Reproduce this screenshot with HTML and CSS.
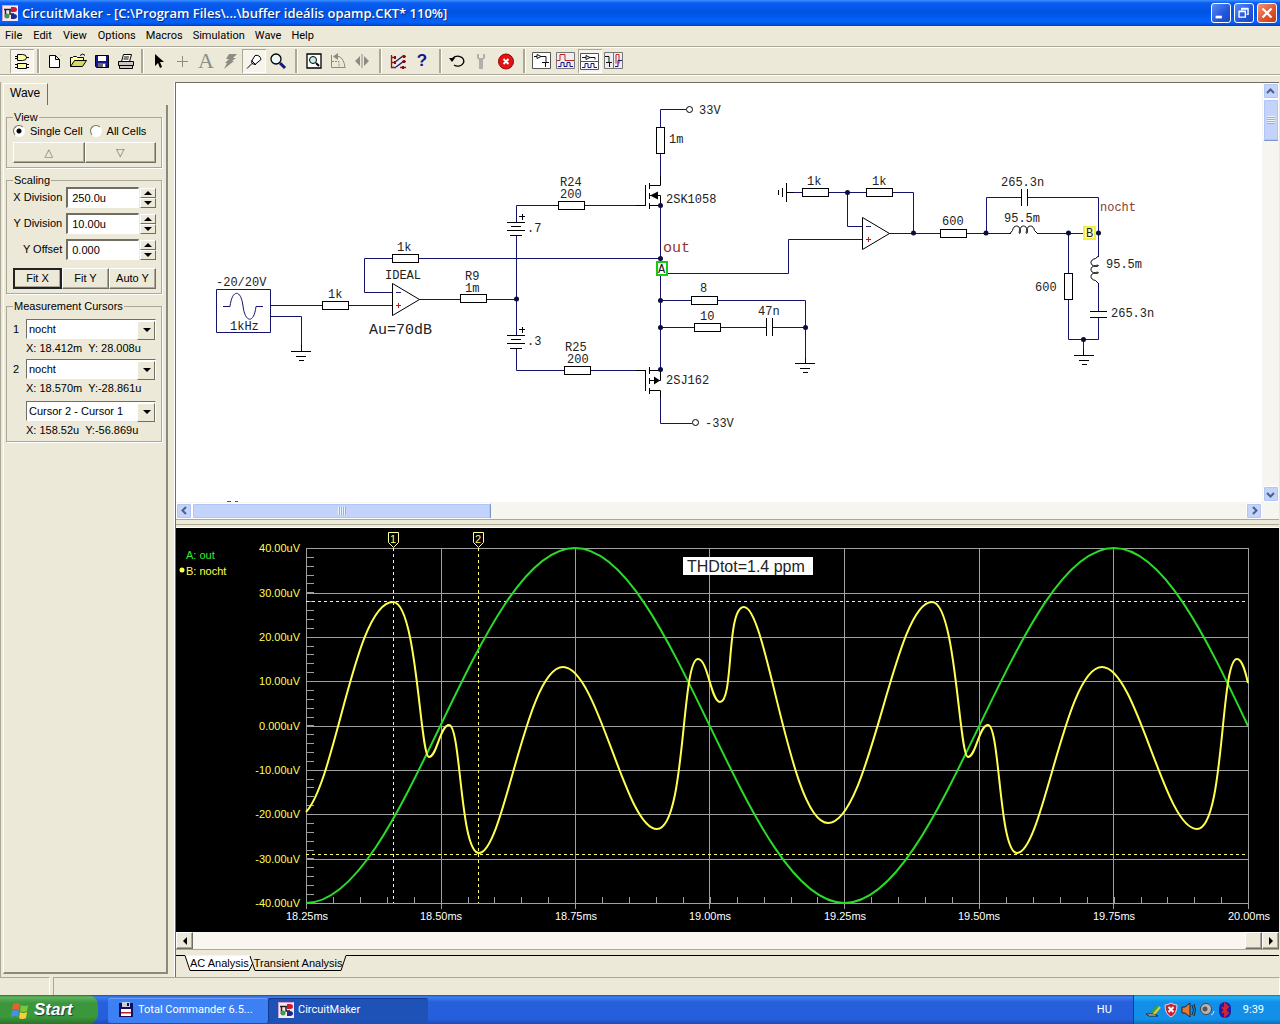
FILE: index.html
```html
<!DOCTYPE html>
<html lang="en">
<head>
<meta charset="utf-8">
<title>CircuitMaker</title>
<link rel="stylesheet" href="styles.css">
</head>
<body>
<svg width="0" height="0" class="defs" aria-hidden="true">
  <defs>
    <symbol id="app" viewBox="0 0 16 16">
      <rect width="16" height="16" fill="#fbe6f0"/>
      <path d="M.5 15.500V.5h15" fill="none" stroke="#c9a0c8"/>
      <path d="M2 4.500h8M3.500 4v8M8 5v4h4" fill="none" stroke="#222" stroke-width="1.500"/>
      <path d="M9 2h3a3 2.500 0 0 1 0 5H9z" fill="#d01830"/>
      <path d="M9 9h3a3 2.500 0 0 1 0 5H9z" fill="#1c2a8c"/>
      <circle cx="5" cy="11" r="2.500" fill="#3c9a50"/>
    </symbol>
    <symbol id="rh" viewBox="0 0 28 10" overflow="visible"><rect x=".5" y=".5" width="26" height="8" fill="#fff" stroke="#000"/></symbol>
    <symbol id="rv" viewBox="0 0 10 28" overflow="visible"><rect x=".5" y=".5" width="8" height="26" fill="#fff" stroke="#000"/></symbol>
    <symbol id="gnd" viewBox="0 0 22 12" overflow="visible"><path d="M0 .5h20M5 5.500h10M8 9.500h5" fill="none" stroke="#000"/></symbol>
    <symbol id="bat" viewBox="0 0 20 16" overflow="visible"><path d="M0 1.500h18M4 5.500h10M0 9.500h18M3 14.500h12M12 -4.500h6M15.500 -7v6" fill="none" stroke="#000"/></symbol>
    <symbol id="amp" viewBox="0 0 30 34" overflow="visible"><path d="M.5 .5v32l27-16z" fill="#fff" stroke="#000"/><path d="M4 9.500h5" stroke="#22227a"/><path d="M4 22.500h5M6.500 20v5" stroke="#c01818"/></symbol>
  </defs>
</svg>

<header class="titlebar">
  <svg class="app-icon" viewBox="0 0 16 16"><use href="#app"/></svg>
  <h1>CircuitMaker - [C:\Program Files\...\buffer ideális opamp.CKT* 110%]</h1>
  <div class="win-buttons">
    <button class="win" aria-label="Minimize"><svg viewBox="0 0 20 20"><path d="M4 14.500h7" stroke="#fff" stroke-width="3"/></svg></button>
    <button class="win" aria-label="Restore"><svg viewBox="0 0 20 20"><path d="M4.500 8.500h7v6h-7zM4 8h8M7.500 7V5.500h7v6H13M7 5h8" fill="none" stroke="#fff" stroke-width="1.500"/></svg></button>
    <button class="win close" aria-label="Close"><svg viewBox="0 0 20 20"><path d="M5 5l10 10M15 5L5 15" stroke="#fff" stroke-width="2.500"/></svg></button>
  </div>
</header>

<nav class="menubar">
  <a href="#">File</a><a href="#">Edit</a><a href="#">View</a><a href="#">Options</a><a href="#">Macros</a><a href="#">Simulation</a><a href="#">Wave</a><a href="#">Help</a>
</nav>

<div class="toolbar" role="toolbar" aria-label="Tools">
  <button class="tool on" aria-label="Parts"><svg viewBox="0 0 24 24"><path d="M7.500 5.500h5q4 0 4 3t-4 3h-5zM5 7.500h2M5 9.500h2M16 8.500h3M7.500 14.500h9v5h-9zM5 15.500h2M17 15.500h2M5 18.500h2M17 18.500h2" fill="#ffffa0" stroke="#000"/></svg></button>
  <span class="sep"></span>
  <button class="tool" aria-label="New"><svg viewBox="0 0 24 24"><path d="M7.500 6.500h6l4 4v8h-10zM13.500 6.500v4h4" fill="#fff" stroke="#000"/><path d="M16 4l2 2M20 6l-2 1M7 4l1 1" stroke="#e8e060"/></svg></button>
  <button class="tool" aria-label="Open"><svg viewBox="0 0 24 24"><path d="M4.500 17.500v-9h2l1-1h3l1 1h6v3" fill="#ffffa0" stroke="#000"/><path d="M4.500 17.500l4-6h12l-4 6z" fill="#d8d860" stroke="#000"/><path d="M14 6.500q3-3 5 0" fill="none" stroke="#000"/></svg></button>
  <button class="tool" aria-label="Save"><svg viewBox="0 0 24 24"><path d="M5.500 6.500h13v12h-12l-1-1z" fill="#14148c" stroke="#000"/><path d="M8 7h8v5H8z" fill="#fff"/><path d="M8 14h8v4H8z" fill="#667"/><path d="M13 15h2v3h-2z" fill="#fff"/></svg></button>
  <button class="tool" aria-label="Print"><svg viewBox="0 0 24 24"><path d="M7.500 12.500l2-7h8l-2 7z" fill="#fff" stroke="#000"/><path d="M4.500 12.500h15v4h-15zM5.500 16.500h13v3h-13z" fill="#c8c8c0" stroke="#000"/><path d="M10 8h5M9.500 10h5" stroke="#000"/></svg></button>
  <span class="sep"></span>
  <button class="tool" aria-label="Arrow"><svg viewBox="0 0 24 24"><path d="M9 5v12l3-3 2 5 2-1-2-5h4z"/></svg></button>
  <button class="tool" aria-label="Wire"><svg viewBox="0 0 24 24"><path d="M12.500 7v11M7 12.500h11" stroke="#8c8c84"/></svg></button>
  <button class="tool letter" aria-label="Text">A</button>
  <button class="tool" aria-label="Delete"><svg viewBox="0 0 24 24"><path d="M11 5h8l-4 4h3l-4 3h2l-10 8 3-6H7l4-4H8z" fill="#8c8c84"/></svg></button>
  <button class="tool on" aria-label="Probe"><svg viewBox="0 0 24 24"><path d="M5 19.500l5-5M9.500 12.500l3.500-6q5-1 6 4l-6 5-3-1zM9.500 11.500l4.500 4.500" fill="#fff" stroke="#000"/></svg></button>
  <button class="tool" aria-label="Zoom"><svg viewBox="0 0 24 24"><circle cx="10" cy="10" r="5" fill="#e8f8f8" stroke="#000" stroke-width="1.300"/><path d="M14 14l5 5" stroke="#14148c" stroke-width="3"/></svg></button>
  <span class="sep wide"></span>
  <button class="tool" aria-label="Fit"><svg viewBox="0 0 24 24"><path d="M5 5h14v14H5z" fill="#fff" stroke="#000" stroke-width="1.300"/><circle cx="11" cy="11" r="3.500" fill="#c8ecec" stroke="#000"/><path d="M14 14l3 3" stroke="#000" stroke-width="2"/></svg></button>
  <button class="tool" aria-label="Rotate"><svg viewBox="0 0 24 24"><path d="M5.500 6v12.500h14M8 7.500h5q5 2 6 11" fill="none" stroke="#8c8c84"/><path d="M6 12.500h7v6" fill="none" stroke="#8c8c84" stroke-dasharray="2 1"/><path d="M12 4v7L7 7.500z" fill="#8c8c84"/></svg></button>
  <button class="tool" aria-label="Mirror"><svg viewBox="0 0 24 24"><path d="M12 5v14" stroke="#8c8c84"/><path d="M10 7v10l-5-5zM14 7v10l5-5z" fill="#8c8c84"/></svg></button>
  <span class="sep wide"></span>
  <button class="tool" aria-label="Simulation setup"><svg viewBox="0 0 24 24"><path d="M9 13l8-6M10 18l8-6" fill="none" stroke="#14148c" stroke-width="1.300"/><path d="M5.500 6v13M5 8.500h4M5 13.500h4M5 18.500h5M16 7.500h4M16 12.500h4M14 18.500h6" fill="none" stroke="#a01010" stroke-width="1.300"/><path d="M8 7h2v3H8zM8 12h2v3H8zM17 6h2v3h-2zM17 11h2v3h-2zM16 17h2v3h-2z" fill="#801010"/></svg></button>
  <button class="tool help" aria-label="Help">?</button>
  <span class="sep wide"></span>
  <button class="tool" aria-label="Reset"><svg viewBox="0 0 24 24"><path d="M6 11a6 5 0 1 1 2 5" fill="none" stroke="#000" stroke-width="1.300"/><path d="M3 9l6 0-3 4z"/></svg></button>
  <button class="tool" aria-label="Step"><svg viewBox="0 0 24 24"><path d="M7 5v4l2 2v9h4v-9l2-2V5h-2v4H9V5z" fill="#b0b0a8"/></svg></button>
  <button class="tool" aria-label="Stop"><svg viewBox="0 0 24 24"><circle cx="12" cy="12.500" r="7.500" fill="#e01414" stroke="#900"/><path d="M9.500 10l5 5M14.500 10l-5 5" stroke="#fff" stroke-width="1.800"/></svg></button>
  <span class="sep wide"></span>
  <button class="tool" aria-label="Schematic view"><svg viewBox="0 0 24 24"><path d="M2.500 3.500h18v16h-18z" fill="#fff" stroke="#555"/><path d="M4 7.500h3v-2l4 2-4 2v-2M11 7.500h5v6M12 13.500h7M15.500 14v4" fill="none" stroke="#111"/></svg></button>
  <button class="tool" aria-label="Waveform view"><svg viewBox="0 0 24 24"><path d="M2.500 3.500h18v16h-18z" fill="#eee" stroke="#777"/><path d="M3 11.500h3v-6h5v6h9" fill="none" stroke="#c02020"/><path d="M4 17.500h3v-4h3v4h3v-4h3v4h3" fill="none" stroke="#14148c"/></svg></button>
  <button class="tool on" aria-label="Split horizontally"><svg viewBox="0 0 24 24"><path d="M2.500 4.500h18v16h-18zM3 12.500h17" fill="#fff" stroke="#555"/><path d="M4 8.500h4v-2l4 2-4 2v-2M12 8.500h5v2" fill="none" stroke="#111"/><path d="M4 18.500h3v-4h3v4h3v-4h3v4h3" fill="none" stroke="#14148c"/></svg></button>
  <button class="tool" aria-label="Split vertically"><svg viewBox="0 0 24 24"><path d="M2.500 3.500h18v16h-18zM11.500 4v15" fill="#eee" stroke="#777"/><path d="M3 7.500h4v6M4 13.500h6M7.500 14v4" fill="none" stroke="#111"/><path d="M14 14.500v-9h3v9" fill="none" stroke="#c02020"/><path d="M13 17.500h3v-6h4" fill="none" stroke="#14148c"/></svg></button>
</div>

<main class="work">
  <aside class="side">
    <div class="side-tab">Wave</div>
    <form class="sheet">
      <fieldset>
        <legend>View</legend>
        <div class="radios">
          <label><input type="radio" name="view" checked>Single Cell</label>
          <label><input type="radio" name="view">All Cells</label>
        </div>
        <div class="pair">
          <button type="button" class="raised arrow" aria-label="Previous">△</button>
          <button type="button" class="raised arrow" aria-label="Next">▽</button>
        </div>
      </fieldset>
      <fieldset>
        <legend>Scaling</legend>
        <div class="field"><label for="xd">X Division</label><input id="xd" type="text" value="250.0u"><span class="spin"><button type="button" class="up" aria-label="X Division up"></button><button type="button" class="down" aria-label="X Division down"></button></span></div>
        <div class="field"><label for="yd">Y Division</label><input id="yd" type="text" value="10.00u"><span class="spin"><button type="button" class="up" aria-label="Y Division up"></button><button type="button" class="down" aria-label="Y Division down"></button></span></div>
        <div class="field"><label for="yo">Y Offset</label><input id="yo" type="text" value="0.000"><span class="spin"><button type="button" class="up" aria-label="Y Offset up"></button><button type="button" class="down" aria-label="Y Offset down"></button></span></div>
        <div class="pair fit">
          <button type="button" class="raised default">Fit X</button>
          <button type="button" class="raised">Fit Y</button>
          <button type="button" class="raised">Auto Y</button>
        </div>
      </fieldset>
      <fieldset class="cursors">
        <legend>Measurement Cursors</legend>
        <label for="c1">1</label>
        <span class="combo"><select id="c1"><option>nocht</option><option>out</option></select></span>
        <output>X: 18.412m&nbsp; Y: 28.008u</output>
        <label for="c2">2</label>
        <span class="combo"><select id="c2"><option>nocht</option><option>out</option></select></span>
        <output>X: 18.570m&nbsp; Y:-28.861u</output>
        <span class="combo last"><select aria-label="Difference"><option>Cursor 2 - Cursor 1</option></select></span>
        <output>X: 158.52u&nbsp; Y:-56.869u</output>
      </fieldset>
    </form>
  </aside>

  <section class="views">
    <div class="schematic">
      <svg viewBox="176 83 1086 419" class="circuit" role="img" aria-label="Circuit schematic">
        <g class="wire">
          <path d="M270 305.500H392M270 316.500H301.500V345M392 292.500H364.500V258.500H660M419 299.500H516"/>
          <path d="M516.500 222V205.500H646M516.500 235V335M516.500 349V370.500H646"/>
          <path d="M686 109.500H660.500V176M660.500 205V370M667 273.500H788.500V239.500H862"/>
          <path d="M660 300.500H805.500V358M660 327.500H766M773 327.500H805M660.500 396V423.500H692"/>
          <path d="M794 192.500H913.500V233M847.500 192V226.500H862M889 233.500H1011M1037 233.500H1098"/>
          <path d="M986.500 233V197.500H1022M1028 197.500H1098.500V257M1098.500 283V311M1098.500 317V339.500H1068.500V233M1083.500 339V350"/>
          <path d="M216.500 289.500h54v43h-54z"/>
          <path d="M223 306.500h7C232 289 241 289 243 306S254 324 256 306.500h7"/>
        </g>
        <g class="part">
          <path d="M301.500 345v6M805.500 358v6M1083.500 350v6M786 192.500h8M786.500 183v19M782.500 188v9M778.500 190v5"/>
          <path d="M645.500 185v20.500H636M649.500 183v6M649.500 193v6M649.500 203v6M649 185.500h11.500V176M649 195.500h11.500V205.500H649"/>
          <path d="M636 370.500h9.500V391M649.500 367v7M649.500 378v6M649.500 388v6M649 370.500h11.500v10H649M649 390.500h11.500V398"/>
          <path d="M766.500 318v18M772.500 318v18M1021.500 189v17M1027.500 189v17M1090 311.500h17M1090 317.500h17"/>
          <path d="M1010 233.500l2.500-3c1-6 7-6 8 0c0 4-2 4-1 0c1-6 7-6 8 0c0 4-2 4-1 0c1-6 7-6 8 0l3 3"/>
          <path d="M1098.500 256l-3 2.500c-6 1-6 7 0 8c4 0 4-2 0-1c-6 1-6 7 0 8c4 0 4-2 0-1c-6 1-6 7 0 8l3 3"/>
          <circle cx="689.500" cy="109.500" r="3"/><circle cx="695.500" cy="422.500" r="3"/>
        </g>
        <path d="M650 195.500l8-4v8zM660 380.500l-6-4v8z"/>
        <g>
          <use href="#rh" x="322" y="301" width="28" height="10"/><use href="#rh" x="392" y="254" width="28" height="10"/>
          <use href="#rh" x="460" y="294" width="28" height="10"/><use href="#rh" x="558" y="201" width="28" height="10"/>
          <use href="#rh" x="564" y="366" width="28" height="10"/><use href="#rh" x="691" y="296" width="28" height="10"/>
          <use href="#rh" x="694" y="323" width="28" height="10"/><use href="#rh" x="802" y="188" width="28" height="10"/>
          <use href="#rh" x="866" y="188" width="28" height="10"/><use href="#rh" x="940" y="229" width="28" height="10"/>
          <use href="#rv" x="656" y="127" width="10" height="28"/><use href="#rv" x="1064" y="273" width="10" height="28"/>
          <use href="#amp" x="392" y="283" width="30" height="34"/><use href="#amp" x="862" y="217" width="30" height="34"/>
          <use href="#bat" x="507" y="221" width="20" height="16"/><use href="#bat" x="507" y="334" width="20" height="16"/>
          <use href="#gnd" x="291" y="351" width="22" height="12"/><use href="#gnd" x="795" y="363" width="22" height="12"/><use href="#gnd" x="1074" y="355" width="22" height="12"/>
        </g>
        <g class="node">
          <circle cx="516.500" cy="299" r="2.500"/><circle cx="660.500" cy="258.500" r="2.500"/><circle cx="660.500" cy="205.500" r="2.500"/>
          <circle cx="660.500" cy="300.500" r="2.500"/><circle cx="660.500" cy="327.500" r="2.500"/><circle cx="660.500" cy="369.500" r="2.500"/>
          <circle cx="805.500" cy="327.500" r="2.500"/><circle cx="847.500" cy="192.500" r="2.500"/><circle cx="913.500" cy="233" r="2.500"/>
          <circle cx="986" cy="233" r="2.500"/><circle cx="1068.500" cy="233" r="2.500"/><circle cx="1098.500" cy="233" r="2.500"/><circle cx="1083.500" cy="339.500" r="2.500"/>
        </g>
        <rect x="657" y="262" width="10" height="13" fill="#fff" stroke="#1c1" stroke-width="2"/>
        <rect x="1084" y="227" width="11" height="12" fill="#ffffc0" stroke="#f0f040" stroke-width="2"/>
        <path d="M227 501.500h4M235 501.500h3" stroke="#555"/>
        <g class="val">
          <text x="216" y="286">-20/20V</text><text x="230" y="330">1kHz</text><text x="328" y="298">1k</text><text x="397" y="251">1k</text>
          <text x="385" y="279">IDEAL</text><text x="465" y="280">R9</text><text x="465" y="292">1m</text>
          <text x="527" y="232">.7</text><text x="527" y="345">.3</text><text x="560" y="186">R24</text><text x="560" y="198">200</text>
          <text x="565" y="351">R25</text><text x="567" y="363">200</text><text x="699" y="114">33V</text><text x="669" y="143">1m</text>
          <text x="666" y="203">2SK1058</text><text x="666" y="384">2SJ162</text><text x="705" y="427">-33V</text>
          <text x="658" y="273">A</text><text x="700" y="292">8</text><text x="700" y="320">10</text><text x="758" y="315">47n</text>
          <text x="807" y="185">1k</text><text x="872" y="185">1k</text><text x="942" y="225">600</text><text x="1001" y="186">265.3n</text>
          <text x="1004" y="222">95.5m</text><text x="1086" y="237">B</text><text x="1106" y="268">95.5m</text><text x="1111" y="317">265.3n</text><text x="1035" y="291">600</text>
          <text x="1100" y="211" class="net">nocht</text>
          <text x="369" y="334" class="big">Au=70dB</text><text x="663" y="252" class="big net">out</text>
        </g>
      </svg>
      <div class="vbar">
        <button class="xp" aria-label="Scroll up"><svg viewBox="0 0 9 9"><path d="M1 6l3.500-3.500L8 6"/></svg></button>
        <div class="xp thumb v"></div>
        <span class="fill"></span>
        <button class="xp" aria-label="Scroll down"><svg viewBox="0 0 9 9"><path d="M1 3l3.500 3.500L8 3"/></svg></button>
      </div>
    </div>
    <div class="hbar">
      <button class="xp" aria-label="Scroll left"><svg viewBox="0 0 9 9"><path d="M6 1L2.500 4.500 6 8"/></svg></button>
      <div class="xp thumb h"></div>
      <span class="fill"></span>
      <button class="xp" aria-label="Scroll right"><svg viewBox="0 0 9 9"><path d="M3 1l3.500 3.500L3 8"/></svg></button>
    </div>
    <div class="splitter"></div>
    <svg viewBox="176 528 1103 404" class="plot" role="img" aria-label="Transient analysis waveforms">
      <path class="grid" d="M306 548.500H1248M306 593.500H1248M306 637.500H1248M306 681.500H1248M306 726.500H1248M306 770.500H1248M306 814.500H1248M306 859.500H1248M306 903.500H1248M306.500 548V909M441.500 548V909M575.500 548V909M709.500 548V909M844.500 548V909M979.500 548V909M1113.500 548V909M1248.500 548V909"/>
      <path class="ticks" d="M310 548V904" stroke-width="8" stroke-dasharray="1 7.870"/>
      <path class="ticks" d="M306 900H1249" stroke-width="7" stroke-dasharray="1 25.920"/>
      <path class="cursor" d="M306 601.500H1248M306 854.500H1248M393.500 548V903M478.500 548V903"/>
      <path class="flag" d="M388.500 532.500h10v10l-5 5-5-5zM473.500 532.500h10v10l-5 5-5-5z"/>
      <path class="trace out" d="M306 903C404 903 477 548 575 548S746 903 844.500 903 1016 548 1114 548C1163 548 1206 637 1248 726"/>
      <path class="trace nocht" d="M306 812C336 780 355 602 393 602C417 602 420 757 429 757C437 757 440 725 449 725C461 725 460 853 479 853C504 853 526 667 563 667C598 667 625 829 657 829C686 829 681 659 698 659C708 659 711 702 720 702C734 702 726 607 744 607C767 607 790 823 828 823C870 823 894 602 932 602C956 602 959 757 968 757C976 757 979 725 988 725C1000 725 999 853 1017 853C1043 853 1065 667 1102 667C1137 667 1164 829 1197 829C1225 829 1220 659 1237 659C1242 659 1245 670 1248 683"/>
      <rect x="683" y="557" width="130" height="18" fill="#fff"/>
      <text x="687" y="572" class="note">THDtot=1.4 ppm</text>
      <g class="lab">
        <text x="393" y="543" class="mid">1</text><text x="478" y="543" class="mid">2</text>
        <text x="186" y="559" class="green">A: out</text><text x="186" y="575">B: nocht</text>
        <circle cx="182" cy="570" r="2.500"/>
        <g class="end">
          <text x="300" y="552">40.00uV</text><text x="300" y="597">30.00uV</text><text x="300" y="641">20.00uV</text><text x="300" y="685">10.00uV</text><text x="300" y="730">0.000uV</text>
          <text x="300" y="774">-10.00uV</text><text x="300" y="818">-20.00uV</text><text x="300" y="863">-30.00uV</text><text x="300" y="907">-40.00uV</text>
        </g>
        <g class="mid white">
          <text x="307" y="920">18.25ms</text><text x="441" y="920">18.50ms</text><text x="576" y="920">18.75ms</text><text x="710" y="920">19.00ms</text>
          <text x="845" y="920">19.25ms</text><text x="979" y="920">19.50ms</text><text x="1114" y="920">19.75ms</text><text x="1249" y="920">20.00ms</text>
        </g>
      </g>
    </svg>
    <div class="classic-bar">
      <button class="raised" aria-label="Scroll left"><svg viewBox="0 0 8 8"><path d="M6 0v8L2 4z"/></svg></button>
      <span class="fill"></span>
      <div class="raised knob"></div>
      <button class="raised" aria-label="Scroll right"><svg viewBox="0 0 8 8"><path d="M2 0v8l4-4z"/></svg></button>
    </div>
    <div class="tabs">
      <svg viewBox="0 0 1103 17" preserveAspectRatio="xMinYMin slice" class="tab-lines" aria-hidden="true"><path d="M9 .5h65l3 7-4 8H14z" fill="#fff"/><path d="M0 .5h9l5 15h59l4-8M74 1l5 14.500h86l5-15h3000" fill="none" stroke="#000"/></svg>
      <a href="#">AC Analysis</a><a href="#">Transient Analysis</a>
    </div>
  </section>
</main>

<footer class="status"><span></span><span></span></footer>

<div class="taskbar">
  <button class="start"><svg viewBox="0 0 18 18"><path d="M2 3q4-2 7 0l-1 6q-3-2-7 0z" fill="#e8602c"/><path d="M10 4q3 2 7 0l-1 6q-4 2-7 0z" fill="#7cc83c"/><path d="M1 10q4-2 7 0l-1 6q-3-2-7 0z" fill="#4c8cf0"/><path d="M9 11q3 2 7 0l-1 6q-4 2-7 0z" fill="#f8d030"/></svg>Start</button>
  <button class="task"><svg viewBox="0 0 16 16"><path d="M1 1h14v14H1z" fill="#101060"/><path d="M4 0h8v5H4z" fill="#ccd"/><path d="M9 1h2v3H9z" fill="#101060"/><path d="M3 7h10v7H3z" fill="#fff"/><path d="M3 10h10v1.500H3z" fill="#c02020"/></svg>Total Commander 6.5...</button>
  <button class="task active"><svg viewBox="0 0 16 16"><use href="#app"/></svg>CircuitMaker</button>
  <span class="lang">HU</span>
  <div class="tray">
    <svg viewBox="0 0 16 16"><path d="M1 12h8l4 2H4z" fill="#eee" stroke="#222"/><path d="M5 11l6-8" stroke="#28c" stroke-width="2"/><path d="M7 11l6-7" stroke="#3a3" stroke-width="2"/><path d="M9 12l6-7" stroke="#e8d020" stroke-width="2"/></svg>
    <svg viewBox="0 0 16 16"><path d="M8 1q3 2 6 2 0 9-6 12-6-3-6-12 3 0 6-2z" fill="#c8202c" stroke="#ddd"/><path d="M5.500 5l5 5M10.500 5l-5 5" stroke="#fff" stroke-width="2"/></svg>
    <svg viewBox="0 0 16 16"><path d="M1 5h3l5-4v14l-5-4H1z" fill="#e87830" stroke="#222"/><path d="M11 3q3 5 0 10M13 2q3 6 0 12" fill="none" stroke="#222"/></svg>
    <svg viewBox="0 0 16 16"><circle cx="7" cy="7" r="5.500" fill="#b8b8b8" stroke="#444"/><circle cx="6" cy="7" r="2.500" fill="#555"/><path d="M12 13q3-1 3-4" fill="none" stroke="#dde"/></svg>
    <svg viewBox="0 0 16 16"><rect x="2" width="12" height="16" rx="6" fill="#1a20a0"/><path d="M5 5l6 6-3 3V2l3 3-6 6" fill="none" stroke="#e02030" stroke-width="1.800"/></svg>
    <time>9:39</time>
  </div>
</div>
</body>
</html>
```
FILE: styles.css
```css
* { box-sizing: border-box; }
body {
  margin: 0;
  min-height: 100vh;
  display: flex;
  flex-direction: column;
  background: #ece9d8;
  color: #000;
  font: 11px/13px "Liberation Sans", Arial, sans-serif;
}
button, input, select { font: inherit; color: inherit; margin: 0; padding: 0; border-radius: 0; }
a { color: inherit; text-decoration: none; }
svg { display: block; }
.defs { position: absolute; }

.titlebar {
  height: 26px;
  display: flex;
  align-items: center;
  padding: 0 3px 0 2px;
  background: linear-gradient(#3a90ff 0, #0a5cf0 3px, #0054e3 12px, #0463fb 22px, #0040c8 100%);
}
.app-icon { width: 16px; height: 16px; }
.titlebar h1 {
  flex: 1;
  margin: 0 0 0 4px;
  font: 600 13px/20px "Open Sans", "Noto Sans", sans-serif;
  color: #fff;
  text-shadow: 1px 1px #0a2a80;
  white-space: nowrap;
}
.win-buttons { display: flex; gap: 3px; }
.win {
  width: 20px;
  height: 20px;
  border: 1px solid #fff;
  border-radius: 3px;
  background: linear-gradient(135deg, #5c8cf4, #2256dc 60%, #1c48c0);
}
.win svg { width: 18px; height: 18px; }
.win.close { background: linear-gradient(135deg, #f09478, #e0502c 60%, #c03c18); }

.menubar {
  height: 20px;
  display: flex;
  align-items: center;
  gap: 11px;
  padding-left: 5px;
  font: 11px/18px Roboto, "Noto Sans", sans-serif;
}
.menubar a:nth-child(n+5) { margin-left: -1px; }

.toolbar {
  height: 29px;
  display: flex;
  align-items: center;
  padding-left: 10px;
  border-top: 1px solid #aca899;
  border-bottom: 1px solid #aca899;
  box-shadow: inset 0 1px #fff, 0 1px #fff;
}
.tool { width: 24px; height: 24px; border: 0; background: none; }
.tool svg { width: 24px; height: 24px; }
.tool.on { background: #f6f4ec; box-shadow: inset 1px 1px #aca899, inset -1px -1px #fff; }
.tool.letter { font: 22px/22px "Liberation Serif", serif; color: #8c8c84; }
.tool.help { font: bold 17px/22px "Liberation Sans", sans-serif; color: #14148c; }
.sep { width: 8px; height: 24px; display: flex; justify-content: center; }
.sep.wide { width: 12px; }
.sep::before { content: ""; width: 2px; background: #aca899; border-right: 1px solid #fff; }

.work { flex: 1; display: flex; padding: 7px 1px 0 0; }
.side { width: 175px; display: flex; flex-direction: column; padding: 1px 6px 3px 2px; border-right: 1px solid #fff; border-left: 1px solid #aca899; }
.side-tab {
  align-self: flex-start;
  height: 22px;
  padding: 3px 7px 0 6px;
  border: 1px solid #fff;
  border-right-color: #716f64;
  border-bottom: 0;
  line-height: 13px;
  font-size: 12px;
}
.sheet {
  flex: 1;
  display: flex;
  flex-direction: column;
  gap: 6px;
  padding: 6px 4px 0 2px;
  border-right: 2px solid #8c897c;
  border-bottom: 2px solid #8c897c;
  border-left: 1px solid #fff;
}
fieldset { min-width: 0; margin: 0; padding: 0 5px 4px 6px; border: 1px solid #aca899; box-shadow: 1px 1px #fff; }
legend { margin: 0; padding: 0 1px; height: 13px; }
.radios { display: flex; align-items: center; gap: 7px; height: 14px; white-space: nowrap; }
.radios label { display: flex; align-items: center; gap: 5px; }
.radios input { appearance: none; width: 12px; height: 12px; border: 1px solid #716f64; border-right-color: #fff; border-bottom-color: #fff; border-radius: 50%; background: #fff; }
.radios input:checked { background: radial-gradient(#000 0 2px, #fff 3px); }
.pair { display: flex; margin-top: 4px; }
.raised { border: 1px solid #fff; border-right-color: #716f64; border-bottom-color: #716f64; background: #ece9d8; box-shadow: inset -1px -1px #aca899; }
.pair .raised { flex: 1; height: 21px; white-space: nowrap; }
.pair .arrow { color: #716f64; font: 11px/17px "DejaVu Sans", sans-serif; }
.pair.fit { margin-top: 8px; }
.pair .default { border: 2px solid #222; }
.field { display: flex; align-items: center; height: 21px; margin: 0 0 5px; }
.field label { width: 50px; text-align: right; white-space: nowrap; }
.field input {
  width: 73px;
  height: 21px;
  margin: 0 1px 0 4px;
  padding-left: 4px;
  border: 2px solid #716f64;
  border-right: 1px solid #fff;
  border-bottom: 1px solid #fff;
  background: #fff;
}
.spin { display: flex; flex-direction: column; width: 16px; height: 20px; }
.spin button { flex: 1; display: flex; align-items: center; justify-content: center; border: 1px solid #fff; border-right-color: #716f64; border-bottom-color: #716f64; background: #ece9d8; }
.spin button::before { content: ""; border: 4px solid transparent; }
.spin .up::before { border-top: 0; border-bottom-color: #000; }
.spin .down::before { border-bottom: 0; border-top-color: #000; }
.cursors { display: grid; grid-template-columns: 13px 1fr; align-items: center; padding-top: 4px; padding-bottom: 2px; }
.cursors .combo { grid-column: 2; margin: 2px 0 3px; }
.cursors .combo.last { margin-top: 4px; }
.cursors output { grid-column: 2; height: 15px; white-space: nowrap; }
.cursors .combo { position: relative; }
.cursors select { appearance: none; display: block; width: 100%; height: 20px; padding-left: 2px; border: 1px solid #716f64; border-right-color: #fff; border-bottom-color: #fff; background: #fff; }
.combo::before { content: ""; position: absolute; right: 1px; top: 2px; width: 16px; height: 17px; background: #ece9d8; border: 1px solid #fff; border-right-color: #716f64; border-bottom-color: #716f64; pointer-events: none; }
.combo::after { content: ""; position: absolute; right: 5px; top: 9px; border: 4px solid transparent; border-top-color: #000; border-bottom: 0; pointer-events: none; }

.views { flex: 1; min-width: 0; display: flex; flex-direction: column; border-left: 1px solid #716f64; border-top: 1px solid #716f64; }
.schematic { display: flex; background: #fff; }
.circuit { flex: 1; min-width: 0; }
.wire, .part { fill: none; stroke: #14146c; }
.part { stroke: #000; }
.part circle { fill: #fff; }
.node { fill: #0c0c3c; }
.val { font: 12px "Liberation Mono", "Courier New", monospace; fill: #222; }
.val .big { font-size: 15px; }
.val .net { fill: #8c3a3a; }

.vbar, .hbar { display: flex; background: #f6f5f0; }
.vbar { width: 17px; flex-direction: column; align-items: center; }
.hbar { height: 17px; padding-right: 17px; align-items: center; }
.fill { flex: 1; }
.xp {
  width: 16px;
  height: 16px;
  display: flex;
  align-items: center;
  justify-content: center;
  border: 1px solid #fff;
  border-radius: 2px;
  background: #c3d3fc;
  box-shadow: inset 0 0 0 1px #b0c6f4;
}
.xp svg { width: 9px; height: 9px; fill: none; stroke: #4d6185; stroke-width: 2; }
.thumb.v { height: 42px; border-bottom-color: #7c98cc; }
.thumb.h { width: 299px; border-right-color: #7c98cc; }
.thumb::before { content: ""; width: 8px; height: 8px; background: repeating-linear-gradient(#eef4fe 0 1px, #8cb0f8 1px 2px); }
.thumb.h::before { background: repeating-linear-gradient(90deg, #eef4fe 0 1px, #8cb0f8 1px 2px); }
.splitter { height: 9px; background: #ece9d8; border-top: 1px solid #aca899; border-bottom: 1px solid #fff; box-shadow: inset 0 -2px #ece9d8, inset 0 -3px #aca899; }

.plot { width: 100%; background: #000; }
.grid, .ticks { fill: none; stroke: #a0a0a0; shape-rendering: crispEdges; }
.cursor { fill: none; stroke: #ffff70; stroke-dasharray: 3 3; }
.flag { fill: #000; stroke: #ffff9c; }
.trace { fill: none; stroke-width: 2; }
.trace.out { stroke: #28dc28; }
.trace.nocht { stroke: #ffff50; }
.note { font: 16px "Liberation Sans", sans-serif; fill: #222; }
.lab { font: 11px "Liberation Sans", sans-serif; fill: #ffff50; }
.lab .green { fill: #30ee30; }
.lab .white { fill: #fff; }
.end { text-anchor: end; }
.mid { text-anchor: middle; }

.classic-bar { display: flex; height: 18px; background: #f8f6ee; border-bottom: 1px solid #aca899; }
.classic-bar .raised { width: 17px; height: 17px; display: flex; align-items: center; justify-content: center; }
.classic-bar svg { width: 8px; height: 8px; }
.tabs { position: relative; display: flex; gap: 5px; height: 22px; margin-top: 5px; padding: 2px 0 0 14px; }
.tab-lines { position: absolute; left: 0; top: 0; width: 100%; height: 17px; }
.tabs a { position: relative; }

.status { display: flex; gap: 3px; height: 18px; }
.status span { border-top: 1px solid #aca899; border-right: 1px solid #fff; }
.status span:first-child { width: 50px; }
.status span:last-child { flex: 1; border-left: 1px solid #aca899; }

.taskbar {
  height: 30px;
  display: flex;
  align-items: center;
  background: linear-gradient(#1c4ab8 0, #3c80f0 2px, #2860dc 7px, #245edb 24px, #1c48ac 100%);
  color: #fff;
  font: 11px/18px Roboto, "Noto Sans", sans-serif;
}
.taskbar button { display: flex; align-items: center; border: 0; }
.taskbar .start {
  width: 98px;
  height: 30px;
  gap: 5px;
  padding-left: 11px;
  margin-right: 10px;
  border-radius: 0 10px 12px 0;
  background: linear-gradient(#2c702c 0, #60b460 2px, #3c963c 8px, #3a983a 22px, #2a6c2a 100%);
  font: italic bold 17px/24px "Liberation Sans", Arial, sans-serif;
  text-shadow: 1px 1px 1px #234;
}
.start svg { width: 18px; height: 18px; }
.task { width: 160px; height: 25px; padding-left: 10px; gap: 4px; border-radius: 3px; background: #3c80f4; box-shadow: inset 0 1px #6ca0fc; white-space: nowrap; }
.task.active { background: #1e52b7; box-shadow: inset 1px 1px #123a90; }
.task svg { width: 16px; height: 16px; }
.lang { margin-left: auto; margin-right: 21px; }
.tray {
  height: 30px;
  display: flex;
  align-items: center;
  gap: 2px;
  padding: 0 16px 0 11px;
  border-left: 1px solid #123a90;
  background: linear-gradient(#0c78d0 0, #24b4f8 2px, #1290e9 7px, #1290e9 24px, #0c68b0 100%);
}
.tray svg { width: 16px; height: 16px; }
.tray time { margin-left: 8px; }
```
